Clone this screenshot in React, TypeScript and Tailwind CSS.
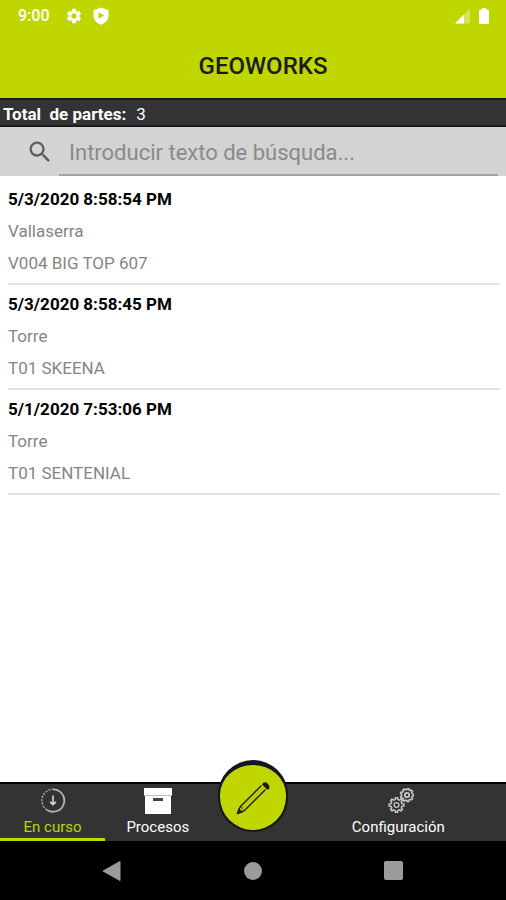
import React from 'react';
import { MdSearch, MdSettings } from 'react-icons/md';

interface WorkItem {
  date: string;
  place: string;
  model: string;
}

const items: WorkItem[] = [
  { date: '5/3/2020 8:58:54 PM', place: 'Vallaserra', model: 'V004 BIG TOP 607' },
  { date: '5/3/2020 8:58:45 PM', place: 'Torre', model: 'T01 SKEENA' },
  { date: '5/1/2020 7:53:06 PM', place: 'Torre', model: 'T01 SENTENIAL' },
];

// Closed outline of a cog wheel with square teeth
const gearPath = (cx: number, cy: number, outer: number, inner: number, teeth: number) => {
  const step = (Math.PI * 2) / teeth;
  const points: string[] = [];
  for (let i = 0; i < teeth; i++) {
    const a = i * step;
    [
      [inner, -0.3],
      [outer, -0.18],
      [outer, 0.18],
      [inner, 0.3],
    ].forEach(([r, k]) => {
      const t = a + k * step;
      points.push(`${(cx + r * Math.cos(t)).toFixed(2)} ${(cy + r * Math.sin(t)).toFixed(2)}`);
    });
  }
  return `M${points.join('L')}Z`;
};

const GearsIcon: React.FC = () => (
  <svg viewBox="-5 0 31 26" className="h-[26px] w-[31px]" fill="none" stroke="#c8c8c8" aria-hidden>
    <path d={gearPath(8.5, 17, 7.4, 5.6, 8)} strokeWidth="1.5" />
    <circle cx="8.5" cy="17" r="2.4" strokeWidth="1.3" />
    <path d={gearPath(19, 7, 6.6, 5.4, 9)} strokeWidth="1.5" />
    <circle cx="19" cy="7" r="2.2" strokeWidth="1.8" />
  </svg>
);

const DownloadIcon: React.FC = () => (
  <svg viewBox="0 0 26 26" className="h-[26px] w-[26px]" fill="none" aria-hidden>
    <path d="M13 1.3a11.2 11.2 0 1 1-6 20.6" stroke="#b4b4b4" strokeWidth="1.8" />
    <path d="M7 21.9A11.2 11.2 0 0 1 13 1.3" stroke="#9a9a9a" strokeWidth="1.6" strokeDasharray="2.2 1.2" />
    <path d="M13 7.5v9M10.2 13.9l2.8 2.8 2.8-2.8" stroke="#dadada" strokeWidth="1.6" />
  </svg>
);

const BoxIcon: React.FC = () => (
  <svg viewBox="0 0 28 26" className="h-[26px] w-7" aria-hidden>
    <path d="M0 0h28v7H0z" fill="#fff" />
    <path d="M1 8h26v18H1z" fill="#fff" />
    <path d="M0 7h28v1H0z" fill="#bdbdbd" />
    <rect x="9" y="10" width="10" height="3" fill="#444" />
  </svg>
);

const PencilIcon: React.FC = () => (
  <svg viewBox="0 0 34 34" className="h-[34px] w-[34px]" fill="none" stroke="#1c1c10" strokeWidth="1.3" aria-hidden>
    <path d="M25.500 4.500L4 26M29.500 8.500L8 30" />
    <path d="M4 26L1.500 32.500 8 30" strokeLinejoin="round" />
    <path d="M6 28L27.500 6.500" stroke="#a3b606" strokeWidth="0.7" />
    <path d="M4 26l2 .3.2 1.500 1.800 2.200" strokeWidth="0.7" />
    <path d="M1.500 32.500l1.500-4.200 3 2.700z" fill="#1c1c10" />
    <path d="M27.500 2.500c2-2 6.500 2 5 5L31.500 8 27 3.500z" fill="#1c1c10" />
  </svg>
);

const StatusBar: React.FC = () => (
  <div className="flex h-8 items-center justify-between pl-[18px] pr-4 text-white">
    <div className="flex items-center">
      <span className="w-9 text-base font-medium">9:00</span>
      <MdSettings className="ml-[11px] h-[18px] w-[18px]" />
      <svg viewBox="0 0 16 18" className="ml-2.5 h-[18px] w-4" aria-hidden>
        <path d="M8 1l7 2.500v5.500c0 4-3 7-7 8.200C4 16 1 13 1 9V3.500z" fill="#fff" stroke="#fff" strokeLinejoin="round" />
        <path d="M5.500 5.200v6.600L11.200 8.500z" fill="#bfd600" />
      </svg>
    </div>
    <div className="flex items-center gap-2">
      <svg viewBox="0 0 16 16" className="h-4 w-4" aria-hidden>
        <path d="M1 15.500L16 0.500v15z" fill="#fff" fillOpacity="0.35" />
        <path d="M1 15.500L10 6.500v9z" fill="#fff" />
      </svg>
      <svg viewBox="0 0 12 18" className="h-[18px] w-3" aria-hidden>
        <path d="M4 1h4v1.500h2a1 1 0 0 1 1 1V17H1V3.500a1 1 0 0 1 1-1h2z" fill="#fff" />
      </svg>
    </div>
  </div>
);

const SearchBar: React.FC = () => (
  <div className="flex h-[49px] bg-[#d3d3d3] pl-[26px] pr-2">
    <label htmlFor="search" className="flex w-[33px] items-center" aria-label="Buscar">
      <MdSearch className="h-7 w-7 text-[#5c5c5c]" />
    </label>
    <input
      id="search"
      type="text"
      placeholder="Introducir texto de búsquda..."
      className="min-w-0 flex-1 border-b-2 border-[#a3a3a3] px-2.5 pt-1 text-[22px] text-[#333] outline-none placeholder:text-[#8a8a8a]"
    />
  </div>
);

const ListItem: React.FC<{ item: WorkItem }> = ({ item }) => (
  <li className="ml-2 mr-1.5 border-b-2 border-[#e3e3e3] pt-[3px] pb-1 text-[17px] leading-8 text-[#858585]">
    <p className="font-bold text-black">{item.date}</p>
    <p>{item.place}</p>
    <p>{item.model}</p>
  </li>
);

interface TabProps {
  label: string;
  icon: React.ReactNode;
  active?: boolean;
}

const Tab: React.FC<TabProps> = ({ label, icon, active = false }) => (
  <button
    type="button"
    className={`flex flex-col items-center gap-0.5 border-b-[3px] pt-1 text-[15px] leading-[22px] ${
      active ? 'border-[#bfd600] text-[#bfd600]' : 'border-transparent text-white'
    }`}
  >
    {icon}
    {label}
  </button>
);

const TabBar: React.FC = () => (
  <nav className="relative grid grid-cols-[21fr_21fr_16fr_43fr] border-t-2 border-black bg-[#333]">
    <Tab label="En curso" icon={<DownloadIcon />} active />
    <Tab label="Procesos" icon={<BoxIcon />} />
    <span />
    <Tab label="Configuración" icon={<GearsIcon />} />
    <button
      type="button"
      aria-label="Nuevo parte"
      className="absolute left-1/2 -top-6 flex h-[72px] w-[70px] -translate-x-1/2 items-center justify-center rounded-full border-2 border-t-[5px] border-[#15151c] bg-[#bfd600]"
    >
      <PencilIcon />
    </button>
  </nav>
);

const SystemNav: React.FC = () => (
  <div className="bg-black">
    <div className="mx-auto grid h-[59px] w-5/6 grid-cols-3 place-items-center">
      <button type="button" aria-label="Atrás">
        <svg viewBox="0 0 20 22" className="h-[22px] w-5" aria-hidden>
          <path d="M1 11L18 1.500v19z" fill="#9b9b9b" stroke="#9b9b9b" strokeLinejoin="round" />
        </svg>
      </button>
      <button type="button" aria-label="Inicio" className="h-[18px] w-[18px] rounded-full bg-[#9b9b9b]" />
      <button type="button" aria-label="Recientes" className="h-[19px] w-[19px] rounded-xs bg-[#9b9b9b]" />
    </div>
  </div>
);

export default function App() {
  return (
    <div className="flex min-h-screen flex-col bg-white font-['Roboto',sans-serif]">
      <header className="bg-[#bfd600]">
        <StatusBar />
        <h1 className="pl-5 pt-[18px] pb-4 text-center text-2xl font-medium text-[#1c1c1c]">GEOWORKS</h1>
      </header>
      <div className="flex h-[29px] items-center gap-2.5 border-y-2 border-[#1a1a1e] bg-[#333] px-[3px] pt-1 text-[17px] text-white">
        <span className="font-bold whitespace-pre">Total  de partes:</span>
        <span>3</span>
      </div>
      <SearchBar />
      <ul className="flex-1 pt-1">
        {items.map((item) => (
          <ListItem key={item.date} item={item} />
        ))}
      </ul>
      <TabBar />
      <SystemNav />
    </div>
  );
}
